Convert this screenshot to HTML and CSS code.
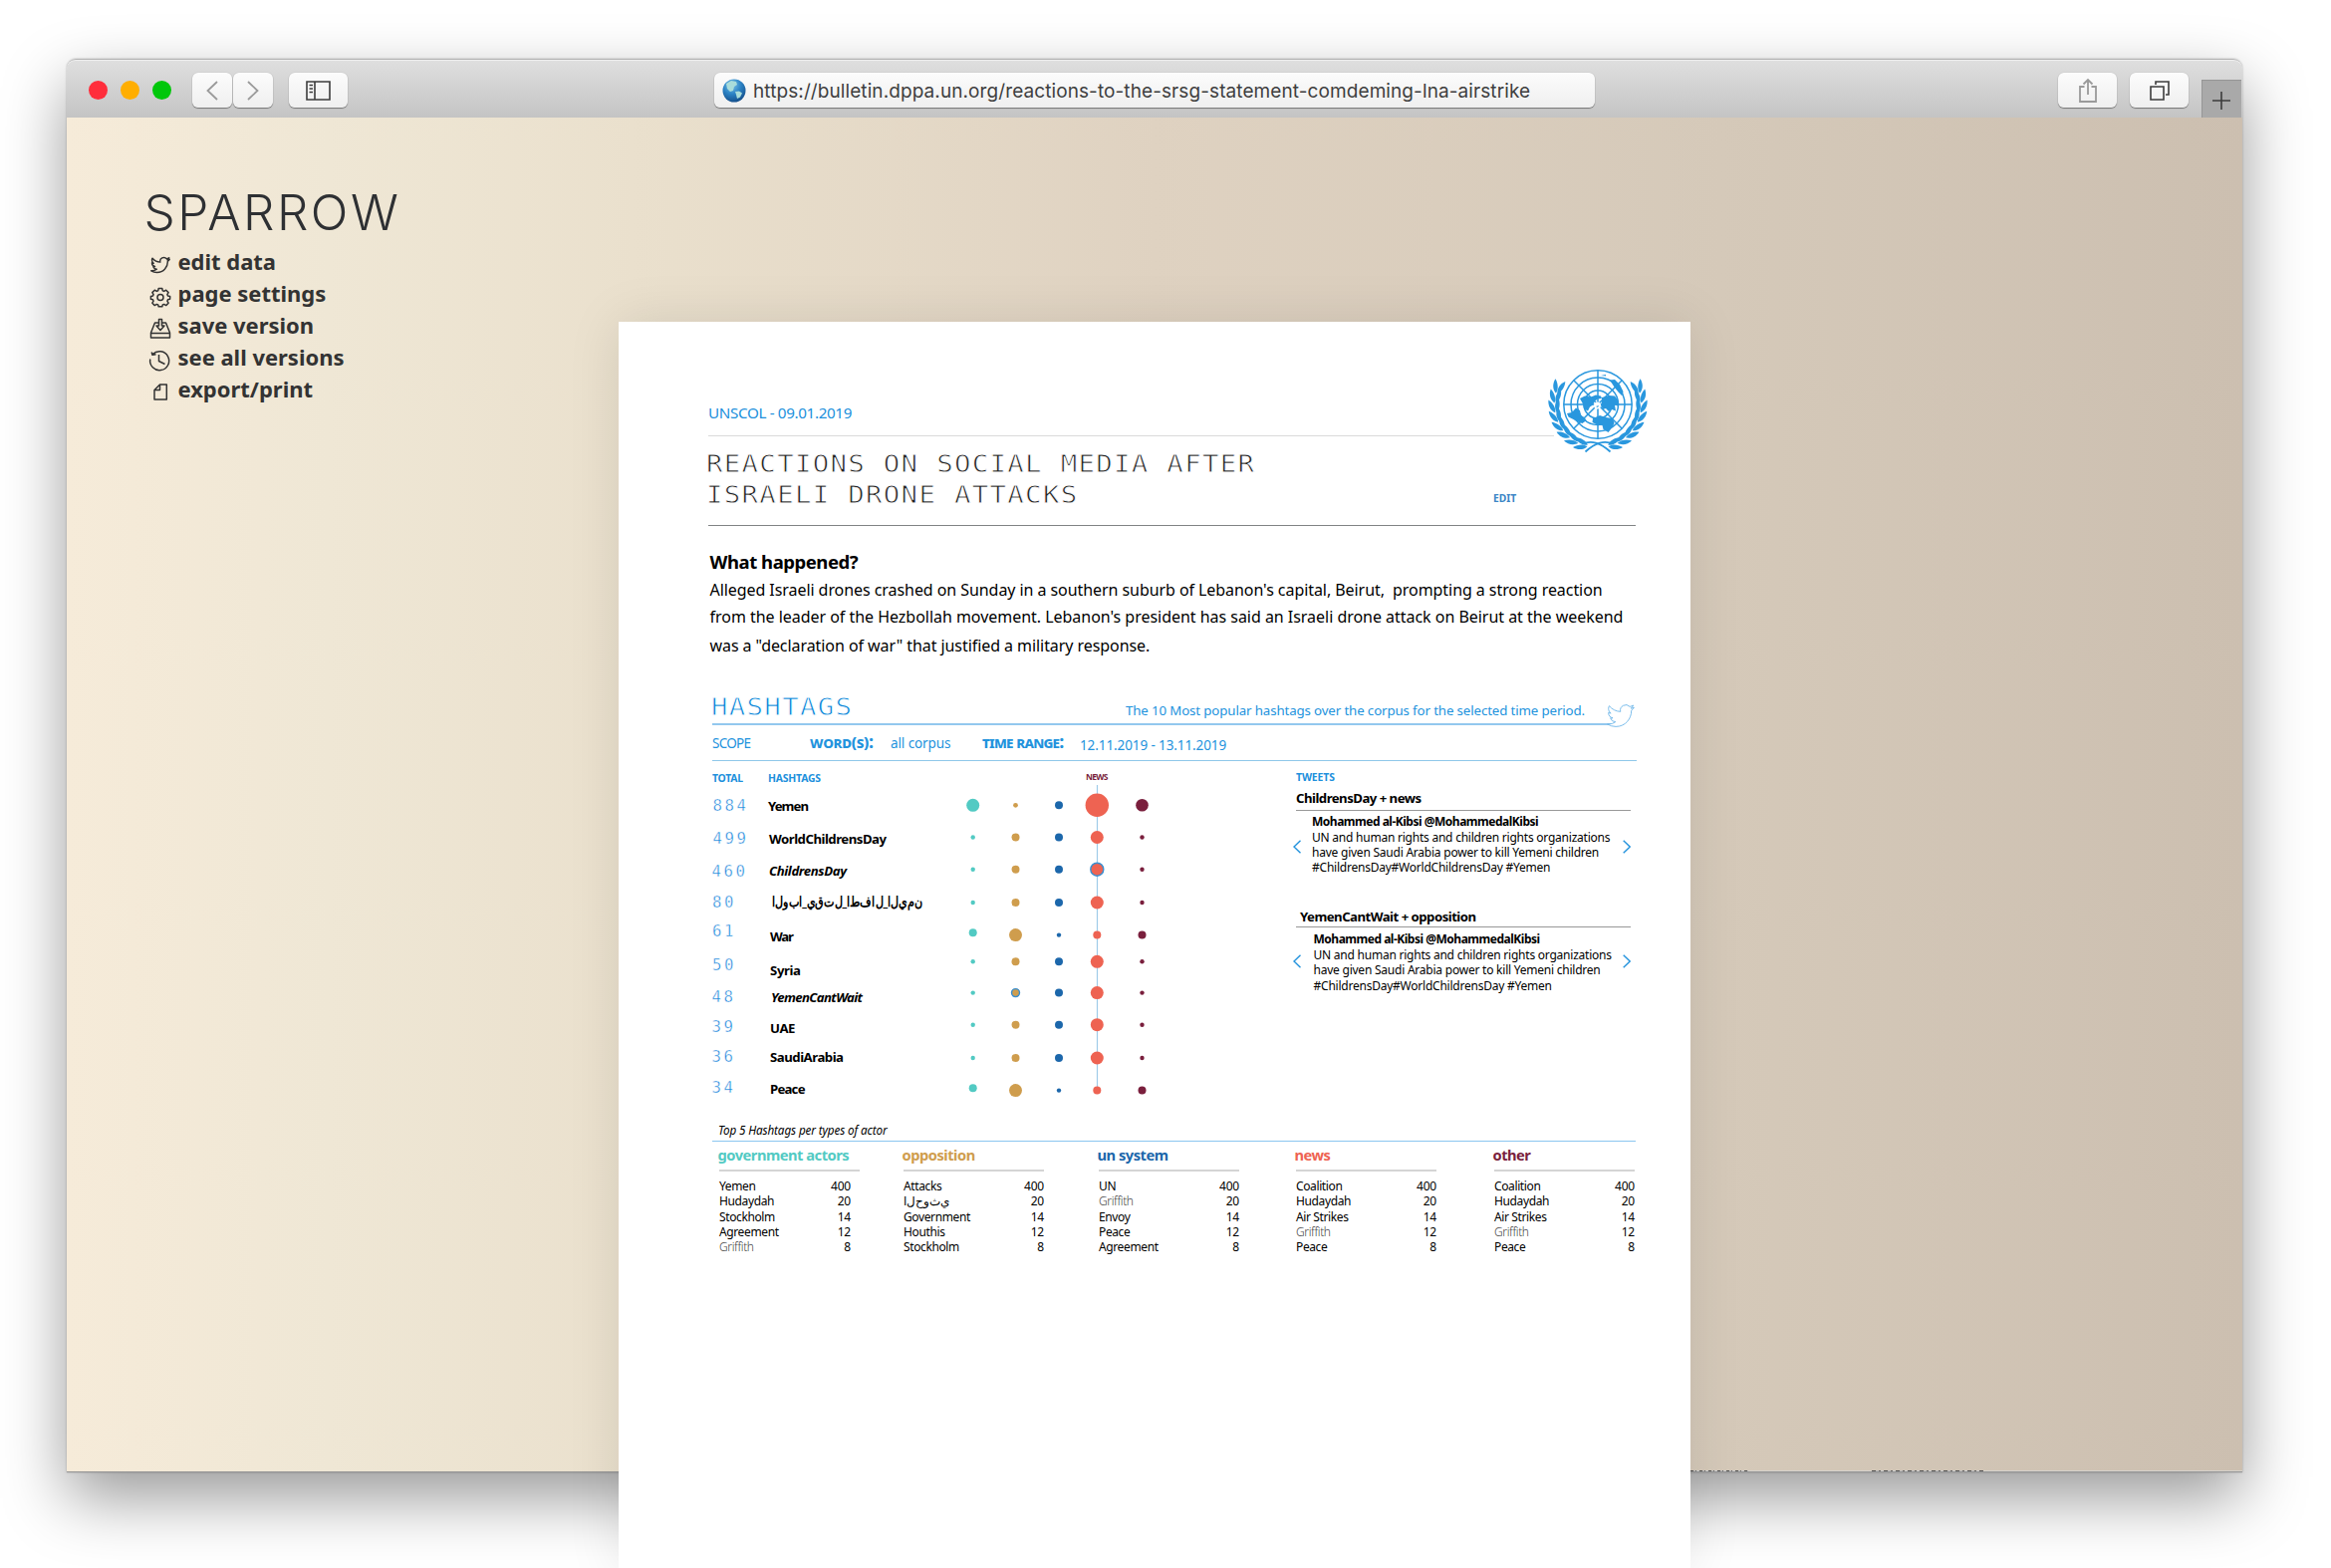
FILE: index.html
```html
<!DOCTYPE html>
<html lang="en">
<head>
<meta charset="utf-8">
<title>Sparrow</title>
<link rel="stylesheet" href="styles.css">
</head>
<body>
<svg class="defs" width="0" height="0">
  <symbol id="bird" viewBox="-1 -1 26 26"><path d="M23.953 4.57a10 10 0 01-2.825.775 4.958 4.958 0 002.163-2.723c-.951.555-2.005.959-3.127 1.184a4.92 4.92 0 00-8.384 4.482C7.69 8.095 4.067 6.13 1.64 3.162a4.822 4.822 0 00-.666 2.475c0 1.71.87 3.213 2.188 4.096a4.904 4.904 0 01-2.228-.616v.06a4.923 4.923 0 003.946 4.827 4.996 4.996 0 01-2.212.085 4.936 4.936 0 004.604 3.417 9.867 9.867 0 01-6.102 2.105c-.39 0-.779-.023-1.17-.067a13.995 13.995 0 007.557 2.209c9.053 0 13.998-7.496 13.998-13.985 0-.21 0-.42-.015-.63A9.935 9.935 0 0024 4.59z"/></symbol>
</svg>
<div class="window">
  <header class="titlebar">
    <div class="lights"><i class="red"></i><i class="amber"></i><i class="green"></i></div>
    <div class="nav">
      <button class="btn small"><svg width="12" height="20" viewBox="0 0 12 20"><path d="M11 1 1.500 10 11 19"/></svg></button>
      <button class="btn small"><svg width="12" height="20" viewBox="0 0 12 20"><path d="M1 1l9.500 9L1 19"/></svg></button>
    </div>
    <button class="btn wide dark"><svg width="25" height="20" viewBox="0 0 25 20"><path d="M1 1h23v18H1zM9 1v18"/><path d="M3.500 4.500H7M3.500 8H7M3.500 11.500H7" stroke-width="1.200"/></svg></button>
    <div class="url">
      <svg width="24" height="24" viewBox="0 0 24 24"><defs><radialGradient id="sea" cx=".4" cy=".25" r=".8"><stop offset="0" stop-color="#7cc4ea"/><stop offset=".5" stop-color="#2b82c4"/><stop offset="1" stop-color="#124a86"/></radialGradient></defs><circle cx="12" cy="12" r="11.500" fill="url(#sea)"/><path d="M4 5l5-3 5 1 1 3-3 2-1 4-3 1-3-3zM13 13l4-.5 3 2-2 4-3 1.500-1-4z" fill="#a9dcda"/></svg>
      <span>https://bulletin.dppa.un.org/reactions-to-the-srsg-statement-comdeming-lna-airstrike</span>
    </div>
    <div class="tools">
      <button class="btn wide"><svg width="20" height="26" viewBox="0 0 20 26"><path d="M6.500 9H2v15h16V9h-4.500M10 17V2M5.500 6.500 10 2l4.500 4.500"/></svg></button>
      <button class="btn wide dark"><svg width="20" height="20" viewBox="0 0 20 20"><path d="M1 6h13v13H1zM6 4V1h13v13h-3"/></svg></button>
    </div>
    <div class="newtab"><svg width="18" height="18" viewBox="0 0 18 18"><path d="M9 0v18M0 9h18"/></svg></div>
  </header>
  <div class="viewport">
    <aside class="sidebar">
      <h1 class="logo">SPARROW</h1>
      <ul class="menu">
        <li><svg viewBox="0 0 24 24"><use href="#bird" x="2" y="2" width="20" height="20" stroke-width="1.900"/></svg>edit data</li>
        <li><svg viewBox="0 0 24 24"><path d="M10.200 3.500h3.600l.5 2.300 1.400.6 2-1.200 2.400 2.400-1.200 2 .6 1.400 2.200.5v1.500l-.1 1.300-2.100.5-.6 1.400 1.200 2-2.400 2.400-2-1.200-1.400.6-.5 1.700h-3.600l-.5-1.700-1.400-.6-2 1.200-2.400-2.400 1.200-2-.6-1.400-2.100-.5v-2.800l2.100-.5.6-1.400-1.200-2 2.400-2.400 2 1.200 1.400-.6z"/><circle cx="12" cy="12.500" r="3"/></svg>page settings</li>
        <li><svg viewBox="0 0 24 24"><path d="M10 6H6.500L2.500 16v5h19v-5l-4-10H14M2.500 16.500h19M10.500 2.500h3V9h2.500l-4 4.500L8 9h2.500z"/></svg>save version</li>
        <li><svg viewBox="0 0 24 24"><path d="M4.300 5.600A9.500 9.500 0 1 1 1.800 10.500M3.200 3.500l.8 2.800 3.500-.5M10.500 6v6.500l6 3"/></svg>see all versions</li>
        <li><svg viewBox="0 0 24 24"><path d="M11.500 4H18.300v15H6V9.500zV9.500H6"/></svg>export/print</li>
      </ul>
    </aside>
    <main class="sheet">
      <svg class="emblem" viewBox="-52 -37 104 88">
        <defs>
          <path id="leaf" d="M0 0C-3.200-4-3-10 .5-14.500 2.800-10 3-4 0 0z"/>
          <g id="pair"><use href="#leaf" transform="translate(0 43.500) rotate(-109)"/><use href="#leaf" transform="translate(0 42) rotate(-74)"/></g>
          <g id="branch">
            <use href="#pair" transform="rotate(14)"/><use href="#pair" transform="rotate(27)"/><use href="#pair" transform="rotate(40)"/><use href="#pair" transform="rotate(53)"/><use href="#pair" transform="rotate(66)"/><use href="#pair" transform="rotate(79)"/><use href="#pair" transform="rotate(92)"/><use href="#pair" transform="rotate(105)"/>
            <path class="stem" d="M-16 39.500C-6 36 2 38 12.500 47.500"/>
          </g>
        </defs>
        <g class="grid"><circle r="34.200"/><circle r="27"/><circle r="20.500"/><circle r="14"/><path d="M0-34v68M-34 0h68M-24-24l48 48M24-24l-48 48"/></g>
        <path d="M-18-6l5-2.500 6 1 5-2 5 1 1 2.500-4 .5-3 2-2 4-3 2-2 4-4-2-1-5zM-31 9l5-1 4-4.500 4 2.500 1 5 3.500 2 2 3-4 3-5-1.500-4-2.500-5-2.500zM4-7l4-1 3-1 6 .5 3 4 0 6-3-1 1 6-4-1.500-3 2-3-3-3 1-2-4 1-4zM-5 14l7-3 6 2 7 1 1.500 5-2 4-4 5-5-3-1-4-6-1-4-2zM12-24.500l5-.5 5 5 3.500 7-1 4.500-4-4-4-5zM3-29l5-1v1.500z"/>
        <circle r="3.500" cx="-.5" cy="1" fill="#fff"/><path d="M-2 2l3-1-1 2z"/>
        <use href="#branch"/><use href="#branch" transform="scale(-1 1)"/>
      </svg>
      <div class="office">UNSCOL - 09.01.2019</div>
      <div class="titlerow">
        <h2>REACTIONS ON SOCIAL MEDIA AFTER<br>ISRAELI DRONE ATTACKS</h2>
        <a class="edit">EDIT</a>
      </div>
      <section class="summary">
        <h3>What happened?</h3>
        <p><span class="l1">Alleged Israeli drones crashed on Sunday in a southern suburb of Lebanon's capital, Beirut,&nbsp; prompting a strong reaction</span>
        <span class="l2">from the leader of the Hezbollah movement. Lebanon's president has said an Israeli drone attack on Beirut at the weekend</span>
        <span class="l3">was a "declaration of war" that justified a military response.</span></p>
      </section>
      <section class="hashtags">
        <div class="head"><h2>HASHTAGS</h2><p>The 10 Most popular hashtags over the corpus for the selected time period.</p>
          <svg class="bird"><use href="#bird"/></svg></div>
        <div class="scope"><span>SCOPE</span><b>word<big>(</big>s<big>):</big></b><span>all corpus</span><b class="range">time range<big>:</big></b><span class="dates">12.11.2019 - 13.11.2019</span></div>
        <div class="body">
          <svg class="chart" viewBox="715 764 586 346">
            <path class="axis" d="M1101.500 788v306"/>
            <g class="cap"><text x="715" y="785" textLength="31">TOTAL</text><text x="771" y="785" textLength="53">HASHTAGS</text><text class="news-cap" x="1090" y="783" textLength="22.500">NEWS</text></g>
            <g class="num">
              <text x="715.500" y="813.700">884</text><text x="715.500" y="846.700">499</text><text x="714.500" y="880">460</text><text x="715" y="910.700">80</text><text x="715" y="940">61</text><text x="715" y="974">50</text><text x="714.500" y="1005.700">48</text><text x="714.500" y="1036.300">39</text><text x="714.500" y="1066.300">36</text><text x="714.500" y="1096.700">34</text>
            </g>
            <g class="tag">
              <text x="771" y="813.700" textLength="41">Yemen</text>
              <text x="772" y="846.700" textLength="118">WorldChildrensDay</text>
              <text x="772" y="879" textLength="78" class="it">ChildrensDay</text>
              <text x="775" y="910" textLength="151" lengthAdjust="spacingAndGlyphs" class="ar">ا&zwnj;ل&zwnj;و&zwnj;ب&zwnj;ا&zwnj;_&zwnj;ي&zwnj;ق&zwnj;ت&zwnj;ل&zwnj;_&zwnj;ا&zwnj;ط&zwnj;ف&zwnj;ا&zwnj;ل&zwnj;_&zwnj;ا&zwnj;ل&zwnj;ي&zwnj;م&zwnj;ن</text>
              <text x="773" y="944.700" textLength="24">War</text>
              <text x="773" y="978.700" textLength="31">Syria</text>
              <text x="774" y="1006" textLength="92" class="it">YemenCantWait</text>
              <text x="773" y="1037" textLength="25.500">UAE</text>
              <text x="773" y="1066" textLength="74">SaudiArabia</text>
              <text x="773" y="1098" textLength="35.500">Peace</text>
            </g>
            <g class="gov"><circle cx="976.700" cy="808.300" r="6.500"/><circle cx="976.700" cy="840.500" r="2.200"/><circle cx="976.700" cy="872.700" r="2.200"/><circle cx="976.700" cy="906" r="2.200"/><circle cx="976.700" cy="936.300" r="4"/><circle cx="976.700" cy="965.300" r="2.200"/><circle cx="976.700" cy="996.600" r="2.200"/><circle cx="976.700" cy="1028.700" r="2.200"/><circle cx="976.700" cy="1062" r="2.200"/><circle cx="976.700" cy="1092.300" r="4"/></g>
            <g class="opp"><circle cx="1019.500" cy="808.300" r="2.400"/><circle cx="1019.500" cy="840.500" r="4"/><circle cx="1019.500" cy="872.700" r="4"/><circle cx="1019.500" cy="906" r="4"/><circle cx="1019.500" cy="938.600" r="6.500"/><circle cx="1019.500" cy="965.300" r="4"/><circle class="ring" cx="1019.500" cy="996.600" r="4"/><circle cx="1019.500" cy="1028.700" r="4"/><circle cx="1019.500" cy="1062" r="4"/><circle cx="1019.500" cy="1094.600" r="6.500"/></g>
            <g class="un"><circle cx="1063" cy="808.300" r="4"/><circle cx="1063" cy="840.500" r="4"/><circle cx="1063" cy="872.700" r="4"/><circle cx="1063" cy="906" r="4"/><circle cx="1063" cy="938.600" r="2.200"/><circle cx="1063" cy="965.300" r="4"/><circle cx="1063" cy="996.600" r="4"/><circle cx="1063" cy="1028.700" r="4"/><circle cx="1063" cy="1062" r="4"/><circle cx="1063" cy="1094.600" r="2.200"/></g>
            <g class="news"><circle cx="1101.300" cy="808.300" r="11.700"/><circle cx="1101.300" cy="840.500" r="6.500"/><circle class="ring" cx="1101.300" cy="872.700" r="6.500"/><circle cx="1101.300" cy="906" r="6.500"/><circle cx="1101.300" cy="938.600" r="4"/><circle cx="1101.300" cy="965.300" r="6.500"/><circle cx="1101.300" cy="996.600" r="6.500"/><circle cx="1101.300" cy="1028.700" r="6.500"/><circle cx="1101.300" cy="1062" r="6.500"/><circle cx="1101.300" cy="1094.600" r="4"/></g>
            <g class="oth"><circle cx="1146.500" cy="808.300" r="6.300"/><circle cx="1146.500" cy="840.500" r="2.200"/><circle cx="1146.500" cy="872.700" r="2.200"/><circle cx="1146.500" cy="906" r="2.200"/><circle cx="1146.500" cy="938.600" r="4"/><circle cx="1146.500" cy="965.300" r="2.200"/><circle cx="1146.500" cy="996.600" r="2.200"/><circle cx="1146.500" cy="1028.700" r="2.200"/><circle cx="1146.500" cy="1062" r="2.200"/><circle cx="1146.500" cy="1094.600" r="4"/></g>
          </svg>
          <div class="tweets">
            <h4>TWEETS</h4>
            <article>
              <h5>ChildrensDay + news</h5>
              <div class="tweet"><svg class="arrow"><path d="M7.500.7 1 7l6.500 6.300"/></svg>
                <p><b>Mohammed al-Kibsi @MohammedalKibsi</b><br>UN and human rights and children rights organizations<br>have given Saudi Arabia power to kill Yemeni children<br>#ChildrensDay#WorldChildrensDay #Yemen</p>
                <svg class="arrow"><path d="M.7.700 7.200 7 .7 13.300"/></svg></div>
            </article>
            <article class="second">
              <h5>YemenCantWait + opposition</h5>
              <div class="tweet"><svg class="arrow"><path d="M7.500.7 1 7l6.500 6.300"/></svg>
                <p><b>Mohammed al-Kibsi @MohammedalKibsi</b><br>UN and human rights and children rights organizations<br>have given Saudi Arabia power to kill Yemeni children<br>#ChildrensDay#WorldChildrensDay #Yemen</p>
                <svg class="arrow"><path d="M.7.700 7.200 7 .7 13.300"/></svg></div>
            </article>
          </div>
        </div>
        <p class="note">Top 5 Hashtags per types of actor</p>
        <div class="actors">
          <div class="gov short"><h4>government actors</h4><dl><dt>Yemen</dt><dd>400</dd><dt>Hudaydah</dt><dd>20</dd><dt>Stockholm</dt><dd>14</dd><dt>Agreement</dt><dd>12</dd><dt class="dim">Griffith</dt><dd>8</dd></dl></div>
          <div class="opp"><h4>opposition</h4><dl><dt>Attacks</dt><dd>400</dd><dt><bdo dir="ltr">ا&zwnj;ل&zwnj;ح&zwnj;و&zwnj;ث&zwnj;ي</bdo></dt><dd>20</dd><dt>Government</dt><dd>14</dd><dt>Houthis</dt><dd>12</dd><dt>Stockholm</dt><dd>8</dd></dl></div>
          <div class="un"><h4>un system</h4><dl><dt>UN</dt><dd>400</dd><dt class="dim">Griffith</dt><dd>20</dd><dt>Envoy</dt><dd>14</dd><dt>Peace</dt><dd>12</dd><dt>Agreement</dt><dd>8</dd></dl></div>
          <div class="news"><h4>news</h4><dl><dt>Coalition</dt><dd>400</dd><dt>Hudaydah</dt><dd>20</dd><dt>Air Strikes</dt><dd>14</dd><dt class="dim">Griffith</dt><dd>12</dd><dt>Peace</dt><dd>8</dd></dl></div>
          <div class="oth"><h4>other</h4><dl><dt>Coalition</dt><dd>400</dd><dt>Hudaydah</dt><dd>20</dd><dt>Air Strikes</dt><dd>14</dd><dt class="dim">Griffith</dt><dd>12</dd><dt>Peace</dt><dd>8</dd></dl></div>
        </div>
      </section>
    </main>
    <div class="cut"></div>
  </div>
</div>
</body>
</html>
```
FILE: styles.css
```css
* { box-sizing: border-box; margin: 0; padding: 0; }
html, body { height: 1574px; overflow: hidden; }
body { background: #fff; font-family: "Noto Sans", sans-serif; color: #000; padding: 59px 0 0 67px; }
svg { display: block; flex: none; }
.defs { position: absolute; }
ul { list-style: none; }

.window {
  width: 2184px; height: 1419px; border-radius: 9px 9px 0 0;
  box-shadow: 0 26px 64px rgba(0, 0, 0, .4), 0 0 2px rgba(0, 0, 0, .3);
}
.titlebar {
  display: flex; align-items: center; height: 59px; padding: 3px 1px 0 22px;
  border-top: 1px solid #b4b4b4; border-radius: 9px 9px 0 0;
  background: linear-gradient(#dfdfdf, #c4c4c4); box-shadow: inset 0 1px 0 #efefef;
}
.lights { display: flex; gap: 13px; margin-right: 21px; }
.lights i { width: 19px; height: 19px; border-radius: 50%; }
.red { background: #ff2d3b; }
.amber { background: #ffae00; }
.green { background: #00c70a; }
.nav { display: flex; gap: 1px; margin-right: 16px; }
.btn, .url {
  display: flex; align-items: center; justify-content: center; height: 35px; border: 0; border-radius: 6px;
  background: linear-gradient(#fcfcfc, #efefef); box-shadow: 0 1px 1px rgba(0, 0, 0, .4), 0 0 1px rgba(0, 0, 0, .25);
}
.small { width: 40px; }
.wide { width: 59px; }
.btn path, .newtab path { fill: none; stroke: #9a9a9a; stroke-width: 1.8; }
.btn.dark path, .newtab path { stroke: #3c3c3c; stroke-width: 1.6; }
.url { width: 884px; margin-left: 368px; padding: 0 0 0 8px; justify-content: flex-start; gap: 7px; }
.url span { font: 19px/36px Inter, sans-serif; letter-spacing: .09px; color: #3f3f3f; white-space: nowrap; padding-top: 2px; }
.tools { display: flex; gap: 13px; margin-left: auto; margin-right: 13px; }
.newtab { align-self: flex-end; width: 40px; height: 38px; display: flex; align-items: center; justify-content: center; padding: 2px 2px 0 0; background: #a9a9a9; border-top: 1px solid #969696; border-left: 1px solid #969696; }

.viewport {
  display: flex; position: relative; height: 1360px; border-bottom: 1px solid #979797;
  background: linear-gradient(90deg, #f6ebd9 0, #efe7d5 12%, #eae0cd 26%, #dfd2c1 50%, #d5c9b9 76%, #ccbfb0 100%);
}
.sidebar { width: 554px; padding-top: 65px; color: #333; }
.logo { font: 300 49.5px/60px Inter, sans-serif; padding-left: 77.5px; letter-spacing: 2.5px; color: #2e3033; }
.menu { padding: 3px 0 0 82px; }
.menu li { display: flex; height: 32px; font: bold 22px/32px "Noto Sans", sans-serif; letter-spacing: -.02px; }
.menu svg { width: 24px; height: 24px; margin: 8px 5.500px 0 0; fill: none; stroke: #333; stroke-width: 1.5; stroke-linejoin: round; }

.sheet { position: relative; width: 1076px; height: 1252px; margin-top: 205px; padding: 79px 55px 0 90px; background: #fff; box-shadow: 0 0 50px rgba(0, 0, 0, .1); }
.emblem { position: absolute; left: 931px; top: 46px; width: 104px; height: 88px; fill: #2997de; }
.emblem .grid, .emblem .stem { fill: none; stroke: #2997de; stroke-width: 1.5; }
.emblem .stem { stroke-width: 1.8; }
.office { width: 849px; height: 36px; border-bottom: 1px solid #dadada; font-size: 15.2px; line-height: 24px; letter-spacing: -.34px; color: #2090dc; }
.titlerow { display: flex; height: 90px; padding-top: 13px; border-bottom: 1.5px solid #808384; }
h2 { font: 24px/31px "DejaVu Sans Mono", monospace; letter-spacing: 1.15px; color: #222; -webkit-text-stroke: .8px #fff; white-space: nowrap; transform: scaleX(1.14); transform-origin: left; }
.titlerow h2 { width: 788px; margin-left: -2px; }
.edit { margin: 41px 0 0 2px; font: bold 10.3px/16px "Noto Sans", sans-serif; color: #3c86c6; }
.summary { padding: 21.5px 0 0 1.500px; white-space: nowrap; }
.summary h3 { font-size: 18.5px; line-height: 28px; letter-spacing: -.45px; }
.summary p { font-size: 16px; letter-spacing: -.065px; }
.summary span { display: block; }
.l1 { line-height: 28px; }
.l2 { line-height: 27px; letter-spacing: -.03px; }
.l3 { line-height: 30px; }

.hashtags { margin: 32px 0 0 4px; }
.head { position: relative; display: flex; justify-content: space-between; align-items: baseline; width: 902px; height: 33px; padding-right: 26px; border-bottom: 2px solid #93c8ee; color: #2393dd; }
.head h2 { color: #0a84d8; margin-left: -1px; }
.head p { font-size: 13.3px; line-height: 20px; letter-spacing: -.13px; }
.bird { position: absolute; left: 896px; top: 9px; width: 32px; height: 29px; fill: #fff; stroke: #6bb5e8; stroke-width: .8; }
.scope { display: grid; grid-template-columns: 98px 81px 92px 98px auto; align-items: baseline; width: 928px; height: 36px; padding-top: 5px; border-bottom: 1px solid #8fc8ea; font-size: 13.500px; line-height: 24px; color: #2393dd; letter-spacing: -.1px; }
.scope span:first-child { letter-spacing: -.7px; }
.scope b { font-size: 16px; font-variant: small-caps; letter-spacing: -.3px; }
.scope big { font-size: 18px; line-height: 1; }
.scope .range { letter-spacing: -.75px; }
.dates { transform: translateY(2px); }
.body { display: flex; }
.chart { width: 586px; height: 346px; }
.axis { stroke: #9fcbe9; stroke-width: 1.2; }
.cap { font-weight: bold; font-size: 10.4px; fill: #2090dc; }
.news-cap { font-size: 8.5px; fill: #7a1f3d; }
.num { font: 15.7px "DejaVu Sans Mono", monospace; letter-spacing: 2.5px; fill: #1583da; stroke: #fff; stroke-width: .45px; }
.tag { font-weight: bold; font-size: 13.2px; }
.it { font-style: italic; }
.ar { direction: ltr; unicode-bidi: bidi-override; font-size: 14px; }
.chart .gov { fill: #52cac3; }
.chart .opp { fill: #cf9d4d; }
.chart .un { fill: #1c67ab; }
.chart .news { fill: #ee6352; }
.chart .oth { fill: #7a1f3d; }
.ring { stroke: #3a8fd0; stroke-width: 1.4; }

.tweets { width: 336px; padding-top: 8px; white-space: nowrap; }
.tweets h4 { font-size: 10.4px; line-height: 16px; letter-spacing: -.1px; color: #2090dc; }
.tweets h5 { margin-top: 3px; height: 23px; font-size: 13.2px; line-height: 20px; letter-spacing: -.52px; border-bottom: 1px solid #999; }
.tweet { display: flex; padding-top: 3.600px; }
.tweet p { width: 312px; font-size: 12px; line-height: 15.4px; letter-spacing: -.23px; }
.tweet b { letter-spacing: -.49px; }
.arrow { width: 8px; height: 14px; margin-top: 26px; fill: none; stroke: #2393dd; stroke-width: 1.4; }
.arrow:first-child { margin-left: -3px; margin-right: 11px; }
.second { margin-top: 31px; }
.second h5 { height: 21px; padding-left: 4px; }
.second .tweet { padding-top: 4.600px; }
.second .arrow { margin-top: 23px; }
.second .arrow:first-child { margin-right: 12.500px; }
.second p { width: 310.500px; }

.note { width: 927px; height: 21px; margin-top: 15px; padding-left: 6px; font-size: 11.7px; font-style: italic; line-height: 18px; letter-spacing: -.12px; border-bottom: 1px solid #8cc6f0; }
.actors { display: grid; grid-template-columns: 185px 196px 198px 199px 141px; padding: 3.400px 0 0 7px; }
.actors > div { width: 141px; }
.actors h4 { height: 27px; margin-left: -1.500px; font-size: 14.7px; line-height: 20px; letter-spacing: -.5px; }
.actors .gov h4 { color: #52cac3; }
.actors .opp h4 { color: #cf9d4d; }
.actors .un h4 { color: #1c67ab; }
.actors .news h4 { color: #ee6352; }
.actors .oth h4 { color: #7a1f3d; }
.actors dl { display: grid; grid-template-columns: 1fr auto; grid-auto-rows: 15.400px; margin-top: -2px; padding-top: 7px; border-top: 2px solid #d4d4d4; font-size: 12px; line-height: 15.400px; letter-spacing: -.38px; }
.actors dd { text-align: right; letter-spacing: -.2px; }
.short dd { padding-right: 9px; }
.dim { font-weight: 300; color: #444; }
.cut { align-self: flex-end; flex: 1; height: 1px; background:
  repeating-linear-gradient(90deg, #555 0 3px, #bbb 3px 5px, #666 5px 6px, #ccc 6px 9px) 0 0 / 58px 1px no-repeat,
  repeating-linear-gradient(90deg, #555 0 4px, #bbb 4px 7px, #666 7px 9px, #ccc 9px 12px) 182px 0 / 112px 1px no-repeat, #d6d2cc; }
```
